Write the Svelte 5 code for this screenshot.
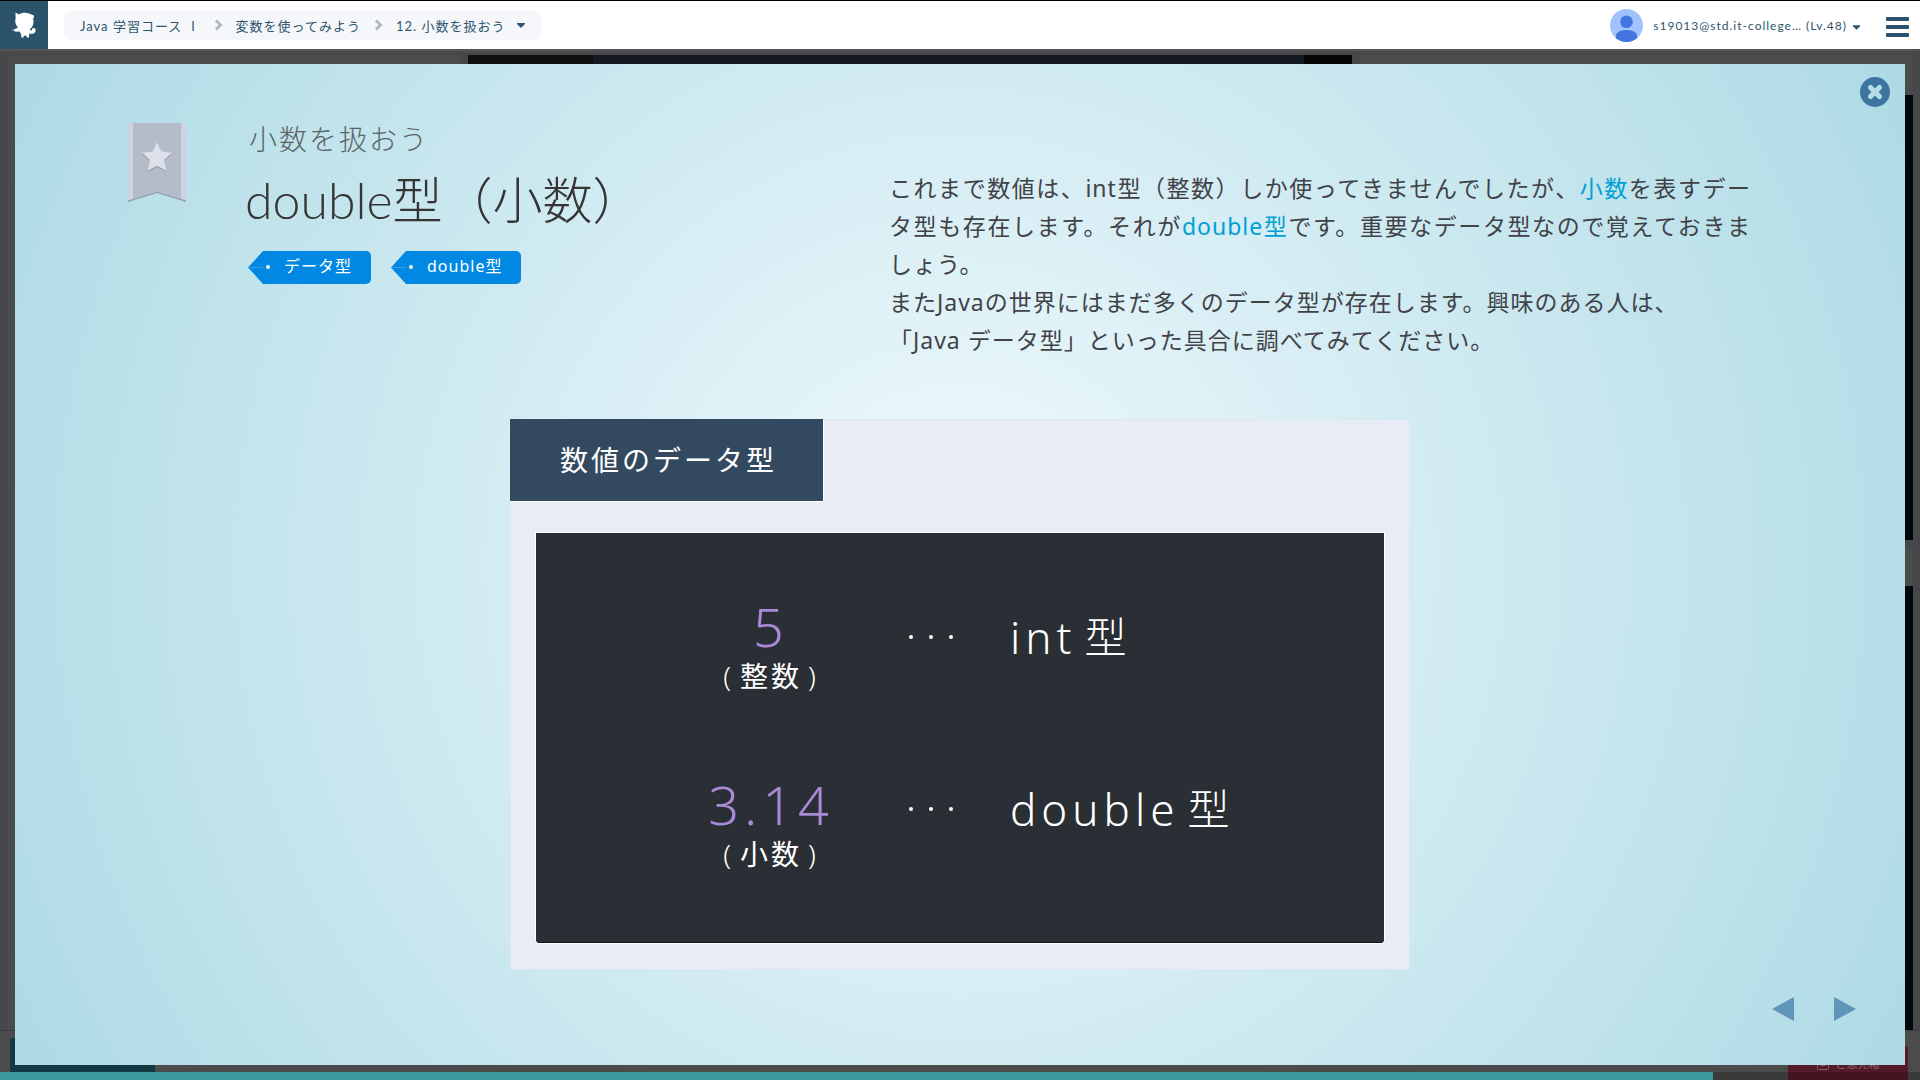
<script>
  const crumbs = ['Java 学習コース Ⅰ', '変数を使ってみよう'];
  const tags = ['データ型', 'double型'];
  const rows = [
    { value: '5', kind: '整数', type: 'int' },
    { value: '3.14', kind: '小数', type: 'double' },
  ];
  const progress = 89.2;
</script>

<div class="page">
  <div class="backdrop" aria-hidden="true">
    <div class="panes">
      <div class="pane side"></div>
      <div class="pane editor"><span></span><span></span><span></span></div>
      <div class="pane output">
        <div class="console"></div>
        <div class="console"></div>
      </div>
    </div>
    <div class="dock">
      <div class="dock-run"></div>
      <div class="dock-feedback">
        <svg viewBox="0 0 12 12" width="12" height="12"><rect x="0.5" y="0.5" width="11" height="11" rx="1" /><path d="M3 5a3 3 0 0 0 6 0" /></svg>
        ご意見箱
      </div>
    </div>
  </div>

  <header>
    <a class="logo" href="#home" aria-label="ホーム">
      <svg viewBox="0 0 24 26" width="24" height="26">
        <path d="M3.5 0.5 L7 2.4 C10 0.6 14 0.4 17 1.6 L21.6 3.2 L22.2 5.8 L21 6.2 C22 9 21.6 12.5 20 15 C19 16.4 17.8 17 17.6 18 C18.6 18.8 19.8 18.4 20 17.4 C20.6 15 23.8 15.6 23.6 18.4 C23.4 21.4 20.4 22.6 17.4 21.4 L17 24 L17 25.6 L15 25.6 L14.4 23.8 L11.8 23.8 L11.6 25.6 L9.4 25.6 L9 22 L7.6 19.6 L3 19.8 L3 18.8 L0 18.6 L4 16.4 L6 15.4 C3.6 13 2.6 9.6 3.6 6 Z" />
      </svg>
    </a>
    <nav class="crumbs" aria-label="パンくず">
      {#each crumbs as crumb}
        <a href="#course">{crumb}</a>
        <svg class="chevron" viewBox="0 0 9 12" width="9" height="12"><path d="M2 1.5 6.5 6 2 10.5" /></svg>
      {/each}
      <button class="current">12. 小数を扱おう
        <svg viewBox="0 0 8 5" width="8" height="5"><path d="M0 0h8v1L4 5 0 1z" /></svg>
      </button>
    </nav>
    <button class="user">
      <svg class="avatar" viewBox="0 0 33 33" width="33" height="33">
        <defs><clipPath id="face"><circle cx="16.5" cy="16.5" r="16.5" /></clipPath></defs>
        <g clip-path="url(#face)">
          <rect width="33" height="33" fill="#a0c3ff" />
          <circle cx="16.5" cy="12.8" r="6.3" fill="#4375e0" />
          <path d="M6 33v-6c0-4 5-6 10.500-6s10.500 2 10.500 6v6z" fill="#4375e0" />
        </g>
      </svg>
      <span>s19013@std.it-college… (Lv.48)</span>
      <svg class="caret" viewBox="0 0 8 5" width="7" height="5"><path d="M0 0h8v1L4 5 0 1z" /></svg>
    </button>
    <button class="menu" aria-label="メニュー"><i></i><i></i><i></i></button>
  </header>

  <main class="modal">
    <button class="close" aria-label="閉じる">
      <svg viewBox="0 0 30 30" width="30" height="30">
        <circle cx="15" cy="15" r="15" fill="#3d759f" />
        <path d="M10.500 10.500 19.500 19.500M19.500 10.500 10.500 19.500" stroke="#b7dde8" stroke-width="5.200" stroke-linecap="round" />
      </svg>
    </button>

    <div class="intro">
      <svg class="bookmark" viewBox="0 0 58 80" width="58" height="80">
        <path d="M0 1h58v78L29 70 0 79z" fill="#8f9eaa" />
        <path d="M0 0h58v77.500L29 68.500 0 77.500z" fill="#ced2df" />
        <path d="M5 0h48v76L29 68.500 5 76z" fill="#b4bbc9" />
        <path d="M29 20l4.400 9.600 10.600 1.200-7.800 7.200 2.200 11-9.400-5.200-9.400 5.200 2.200-11-7.800-7.200 10.600-1.200z" fill="#8c94a2" />
        <path d="M29 19l4.400 9.600 10.600 1.200-7.800 7.200 2.200 11-9.400-5.200-9.400 5.200 2.200-11-7.800-7.200 10.600-1.200z" fill="#dde0e9" />
      </svg>
      <div class="titles">
        <p class="subtitle">小数を扱おう</p>
        <h1>double型（小数）</h1>
        <ul class="tags">
          {#each tags as tag}
            <li>
              <svg viewBox="0 0 24 33" width="24" height="33">
                <path d="M15 0 0 16.500 15 33h9V0z" fill="#0088e2" />
                <path d="M0 16.500h15" stroke="#3ba0e2" />
                <circle cx="20" cy="16" r="2" fill="#fff" />
              </svg>
              <a href="#tag">{tag}</a>
            </li>
          {/each}
        </ul>
      </div>
      <div class="lead">
        <p>これまで数値は、int型（整数）しか使ってきませんでしたが、<em>小数</em>を表すデータ型も存在します。それが<em>double型</em>です。重要なデータ型なので覚えておきましょう。</p>
        <p>またJavaの世界にはまだ多くのデータ型が存在します。興味のある人は、<br />「Java データ型」といった具合に調べてみてください。</p>
      </div>
    </div>

    <section class="card">
      <h2>数値のデータ型</h2>
      <div class="board">
        <div class="values">
          {#each rows as row}
            <div class="value">
              <strong>{row.value}</strong>
              <span><b>(</b>{row.kind}<b>)</b></span>
            </div>
          {/each}
        </div>
        <div class="types">
          {#each rows as row}
            <div class="type">
              <span class="dots"><i></i><i></i><i></i></span>
              <span>{row.type}</span>
              <span class="kanji">型</span>
            </div>
          {/each}
        </div>
      </div>
    </section>

    <div class="pager">
      <button aria-label="前へ"><svg viewBox="0 0 22 24" width="22" height="24"><path d="M22 0v24L0 12z" /></svg></button>
      <button aria-label="次へ"><svg viewBox="0 0 22 24" width="22" height="24"><path d="M0 0v24l22-12z" /></svg></button>
    </div>
  </main>

  <div class="progress"><div style="width: {progress}%"></div></div>
</div>

<style>
  :global(body) {
    margin: 0;
  }
  .page {
    position: relative;
    display: flex;
    flex-direction: column;
    min-height: 100vh;
    background: #464749;
    color: #414248;
    font-family: 'Noto Sans', 'Noto Sans CJK JP', sans-serif;
  }
  button {
    padding: 0;
    border: 0;
    background: none;
    color: inherit;
    font: inherit;
    letter-spacing: inherit;
    cursor: pointer;
  }
  a {
    color: inherit;
    text-decoration: none;
  }
  svg {
    display: block;
    flex: none;
  }
  h1,
  h2,
  p,
  ul {
    margin: 0;
    padding: 0;
  }

  /* Dimmed workspace behind the lesson */
  .backdrop {
    position: absolute;
    inset: 0;
    display: flex;
    flex-direction: column;
    overflow: hidden;
  }
  .panes {
    flex: 1;
    display: grid;
    grid-template-columns: 453fr 884fr 553fr;
    gap: 8px;
    padding: 55px 7px 0;
  }
  .side {
    background: #4b4b4b;
    border-radius: 6px 6px 0 0;
  }
  .editor {
    display: grid;
    grid-template-columns: 125fr 711fr 48fr;
  }
  .editor span {
    background: #101010;
  }
  .editor span:nth-child(2) {
    background: #141820;
  }
  .editor span:nth-child(3) {
    background: #050505;
  }
  .output {
    display: flex;
    flex-direction: column;
  }
  .console {
    flex: 1;
    border-top: 40px solid #4b4b4b;
    background: #00080a;
  }
  .console + .console {
    margin-top: 6px;
  }
  .dock {
    display: flex;
    justify-content: space-between;
    align-items: flex-end;
    height: 49px;
    border-top: 1px solid #3c3c3e;
    background: #4b4b4b;
  }
  .dock-run {
    width: 145px;
    height: 42px;
    margin-left: 10px;
    border-radius: 3px 3px 0 0;
    background: #123844;
  }
  .dock-feedback {
    display: flex;
    justify-content: center;
    gap: 7px;
    width: 120px;
    height: 34px;
    margin-right: 12px;
    padding-top: 12px;
    box-sizing: border-box;
    border-radius: 3px 3px 0 0;
    background: #541a27;
    color: #86606a;
    font-size: 11px;
    line-height: 12px;
  }
  .dock-feedback svg {
    fill: none;
    stroke: #86606a;
  }

  header {
    position: relative;
    display: flex;
    align-items: center;
    height: 49px;
    box-sizing: border-box;
    border-top: 1px solid #000;
    background: #fff;
    color: #2d566d;
    box-shadow: 0 1px 4px #626365;
  }
  .logo {
    display: flex;
    align-items: center;
    justify-content: center;
    align-self: stretch;
    width: 48px;
    background: #2b536a;
  }
  .logo svg {
    fill: #fff;
  }
  .crumbs {
    display: flex;
    align-items: center;
    gap: 13px;
    height: 29px;
    margin: 0 auto 0 16px;
    padding: 0 16px;
    border-radius: 5px;
    background: #f5f7fb;
    font-size: 13px;
    letter-spacing: 1px;
    font-family: Lato, 'Noto Sans CJK JP', sans-serif;
    white-space: nowrap;
  }
  .chevron {
    fill: none;
    stroke: #b3b9c6;
    stroke-width: 3;
  }
  .current {
    display: flex;
    align-items: center;
    gap: 12px;
  }
  .current svg,
  .caret {
    fill: #2d566d;
  }
  .user {
    display: flex;
    align-items: center;
    font: 12px Lato, sans-serif;
    letter-spacing: 1px;
    white-space: nowrap;
  }
  .user span {
    margin: 0 6px 0 10px;
  }
  .caret {
    margin-top: 4px;
  }
  .menu {
    display: grid;
    gap: 4px;
    width: 23px;
    margin: 3px 11px 0 26px;
  }
  .menu i {
    height: 4px;
    border-radius: 1px;
    background: #2b536a;
  }

  .modal {
    position: relative;
    flex: 1;
    display: flex;
    flex-direction: column;
    margin: 15px 15px 7px;
    background: radial-gradient(circle farthest-corner at center, #f0fafd, #aedae5);
  }
  .close {
    position: absolute;
    top: 13px;
    right: 15px;
  }
  .close svg {
    fill: none;
  }
  .intro {
    display: flex;
    padding: 58px 154px 0 113px;
  }
  .bookmark {
    margin-top: 1px;
  }
  .titles {
    flex: 1;
    margin-left: 59px;
  }
  .subtitle {
    margin-left: 4px;
    color: #5c6468;
    font: 300 28px/32px 'Noto Sans CJK JP', sans-serif;
    letter-spacing: 2px;
  }
  h1 {
    margin-top: 16px;
    color: #363434;
    font-family: Lato, 'Noto Sans CJK JP', sans-serif;
    font-weight: 300;
    font-size: 50px;
    line-height: 60px;
  }
  .tags {
    display: flex;
    gap: 20px;
    margin: 21px 0 0 3px;
    list-style: none;
  }
  .tags li {
    display: flex;
  }
  .tags a {
    padding: 0 19px 0 12px;
    border-radius: 0 5px 5px 0;
    background: #0088e2;
    color: #fff;
    font-size: 16px;
    line-height: 31px;
    letter-spacing: 1px;
  }
  .lead {
    width: 862px;
    flex: none;
    padding-top: 47px;
    font-size: 23px;
    line-height: 38px;
    letter-spacing: 1px;
    text-align: justify;
  }
  .lead em {
    color: #009fd4;
    font-style: normal;
  }

  .card {
    width: 900px;
    box-sizing: border-box;
    margin: 60px auto 0;
    padding-bottom: 26px;
    border: 1px solid #dce6f2;
    background: #e8ecf5;
  }
  h2 {
    width: 313px;
    box-sizing: border-box;
    margin: -1px 0 0 -1px;
    padding-left: 4px;
    background: #33495f;
    color: #fff;
    font-weight: 400;
    font-size: 28px;
    line-height: 82px;
    letter-spacing: 3px;
    text-align: center;
    box-shadow: 1px 1px 0 #fff;
  }
  .board {
    display: grid;
    grid-template-columns: 200px 1fr;
    align-items: start;
    height: 410px;
    box-sizing: border-box;
    margin: 32px 25px 0;
    padding: 18px 0 0 135px;
    border-radius: 0 0 4px 4px;
    background: #2a2e35;
    color: #fff;
    font-weight: 300;
    box-shadow: 0 0 1px 1px #fff, inset 0 -1px 0 #15181d;
  }
  .values,
  .types {
    display: grid;
    align-items: center;
  }
  .values {
    grid-auto-rows: 178px;
    padding-top: 6px;
  }
  .types {
    grid-auto-rows: 172px;
  }
  .value {
    display: grid;
    justify-items: center;
  }
  .value strong {
    color: #a98ad8;
    font-weight: 300;
    font-size: 54px;
    line-height: 60px;
    letter-spacing: 5px;
  }
  .value span {
    display: flex;
    gap: 6px;
    font-weight: 400;
    font-size: 28px;
    line-height: 40px;
    letter-spacing: 3px;
  }
  .value b {
    font-weight: 300;
  }
  .type {
    display: flex;
    align-items: center;
    gap: 8px;
    font-size: 44px;
    line-height: 60px;
    letter-spacing: 5px;
  }
  .dots {
    display: flex;
    gap: 16px;
    margin: 0 49px 0 38px;
  }
  .dots i {
    width: 4px;
    height: 4px;
    border-radius: 50%;
    background: #fff;
  }
  .kanji {
    font-size: 42px;
  }

  .pager {
    display: flex;
    justify-content: flex-end;
    gap: 40px;
    margin: auto 49px 44px 0;
    padding-top: 24px;
  }
  .pager svg {
    fill: #5f95b8;
  }

  .progress {
    position: relative;
    height: 8px;
    background: rgb(0 0 0 / 22%);
  }
  .progress div {
    height: 8px;
    background: #3c9a9e;
  }
</style>
